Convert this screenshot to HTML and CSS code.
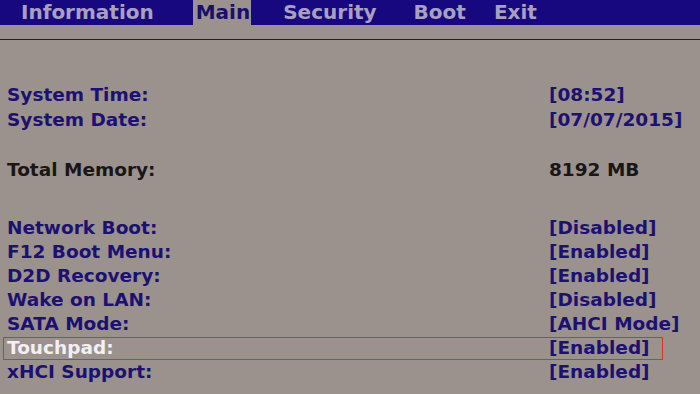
FILE: index.html
```html
<!DOCTYPE html>
<html>
<head>
<meta charset="utf-8">
<link rel="stylesheet" href="styles.css">
</head>
<body>
<div class="menubar">
  <span class="tab t-info">Information</span>
  <span class="tab t-main active">Main</span>
  <span class="tab t-sec">Security</span>
  <span class="tab t-boot">Boot</span>
  <span class="tab t-exit">Exit</span>
</div>
<div class="rule"></div>
<div class="content">
  <div class="group g1">
    <div class="row"><span class="label">System Time:</span><span class="value">[08:52]</span></div>
    <div class="row"><span class="label">System Date:</span><span class="value">[07/07/2015]</span></div>
  </div>
  <div class="group g2">
    <div class="row info"><span class="label">Total Memory:</span><span class="value">8192 MB</span></div>
  </div>
  <div class="group g3">
    <div class="row"><span class="label">Network Boot:</span><span class="value">[Disabled]</span></div>
    <div class="row"><span class="label">F12 Boot Menu:</span><span class="value">[Enabled]</span></div>
    <div class="row"><span class="label">D2D Recovery:</span><span class="value">[Enabled]</span></div>
    <div class="row"><span class="label">Wake on LAN:</span><span class="value">[Disabled]</span></div>
    <div class="row"><span class="label">SATA Mode:</span><span class="value">[AHCI Mode]</span></div>
    <div class="row selected"><span class="label">Touchpad:</span><span class="value">[Enabled]</span><span class="focus"></span></div>
    <div class="row"><span class="label">xHCI Support:</span><span class="value">[Enabled]</span></div>
  </div>
</div>
</body>
</html>
```

FILE: styles.css
```css
html, body {
  margin: 0;
  padding: 0;
  width: 700px;
  height: 394px;
  overflow: hidden;
  background: #9b928e;
  font-family: "DejaVu Sans", "Open Sans", sans-serif;
  font-weight: 700;
}
.menubar {
  height: 25px;
  background: #18087f;
  display: flex;
  align-items: stretch;
  padding-left: 21px;
}
.tab {
  color: #a9a0c0;
  font-size: 20px;
  line-height: 25px;
  white-space: nowrap;
}
.tab.active {
  background: #9b928e;
  color: #1a0f6e;
  padding: 0 1px 0 3px;
}
.t-main { margin-left: 39px; }
.t-sec { margin-left: 32px; }
.t-boot { margin-left: 37px; }
.t-exit { margin-left: 28px; }
.rule {
  margin-top: 14px;
  height: 1px;
  background: #1d1270;
}
.content {
  padding-top: 42px;
}
.group { display: flex; flex-direction: column; }
.g2 { margin-top: 26px; }
.g3 { margin-top: 34px; }
.row {
  display: grid;
  grid-template-columns: 542px auto;
  padding-left: 7px;
  font-size: 18.5px;
  line-height: 24px;
  color: #1c1170;
  white-space: nowrap;
  position: relative;
}
.g1 .row { line-height: 25px; }
.row.info { color: #1a1616; }
.row.selected { color: #f2f0f2; }
.row.selected .value { color: #1c1170; }
.focus {
  position: absolute;
  left: 3px;
  width: 660px;
  top: 1px;
  height: 23px;
  box-sizing: border-box;
  border: 1px solid #e0302a;
  pointer-events: none;
}
```
